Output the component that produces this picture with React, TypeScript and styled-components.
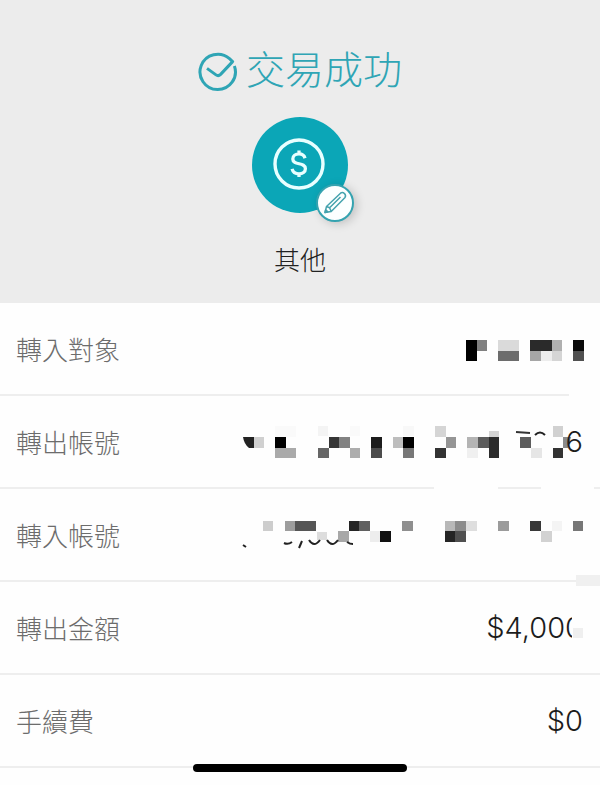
import React from "react";
import styled, { createGlobalStyle } from "styled-components";

const GlobalStyle = createGlobalStyle`
  * { box-sizing: border-box; }
  body {
    margin: 0;
    background: #fefefe;
    font-family: Inter, "Noto Sans CJK TC", sans-serif;
    font-weight: 300;
  }
`;

const Page = styled.main`
  position: relative;
  min-height: 100vh;
  background: #fefefe;
`;

const Header = styled.header`
  display: flex;
  flex-direction: column;
  align-items: center;
  padding: 40px 16px 24px;
  background: #ececec;
`;

const Status = styled.h1`
  display: flex;
  align-items: center;
  gap: 8px;
  margin: 0;
  color: #2fa5b5;
  font-size: 39px;
  font-weight: 300;
  line-height: 60px;
`;

const StatusIcon = styled.svg`
  width: 40px;
  height: 40px;
  margin-top: 4px;
`;

const Category = styled.div`
  position: relative;
  width: 96px;
  height: 96px;
  margin-top: 17px;
  border-radius: 50%;
  background: #0ba6b7;
`;

const CategoryIcon = styled.svg`
  display: block;
  width: 96px;
  height: 96px;
`;

const EditButton = styled.button`
  position: absolute;
  right: -6px;
  bottom: -9px;
  display: grid;
  place-items: center;
  width: 38px;
  height: 38px;
  padding: 0;
  border: 2px solid #35a3b0;
  border-radius: 50%;
  background: #fcffff;
  box-shadow: 3px 2px 10px rgba(0, 0, 0, 0.18);
  cursor: pointer;
`;

const CategoryName = styled.p`
  margin: 30px 0 0;
  color: #222;
  font-size: 26px;
  line-height: 36px;
`;

const Details = styled.dl`
  margin: 0;
`;

const Row = styled.div`
  position: relative;
  display: flex;
  align-items: center;
  justify-content: space-between;
  height: 93px;
  padding: 4px 16px 0;
  border-bottom: 2px solid #eeeeee;
`;

const Label = styled.dt`
  color: #6c6c6c;
  font-size: 26px;
  line-height: 36px;
`;

const Value = styled.dd`
  position: relative;
  display: flex;
  align-items: center;
  margin: 0;
  color: #1c1c1c;
  font-size: 29px;
  line-height: 40px;
`;

const Amount = styled(Value)`
  padding: 0 1px 4px 0;
`;

const AccountValue = styled(Value)`
  padding: 0 1px 4px 0;
`;

const MaskedValue = styled(Value)`
  padding-bottom: 4px;
`;

const Mosaic = styled.svg`
  display: block;
  overflow: visible;
`;

const LineCover = styled.span<{ $right: number; $width: number }>`
  position: absolute;
  right: ${(p) => p.$right}px;
  bottom: -2px;
  width: ${(p) => p.$width}px;
  height: 2px;
  background: #fefefe;
`;

const LineBlock = styled.span`
  position: absolute;
  right: 0;
  bottom: -6px;
  z-index: 1;
  width: 24px;
  height: 11px;
  background: #f0f0f0;
`;

const DigitCover = styled.span`
  position: absolute;
  right: 0;
  top: 0;
  width: 12px;
  height: 40px;
  background: linear-gradient(#efefef, #efefef) 1px 20px / 10px 10px no-repeat #fefefe;
`;

const HomeIndicator = styled.div`
  position: fixed;
  bottom: 13px;
  left: 0;
  right: 0;
  width: 214px;
  height: 8px;
  margin: 0 auto;
  border-radius: 4px;
  background: #000;
`;

type Block = [x: number, y: number, w: number, h: number, fill: string];

const recipientBlocks: Block[] = [
  [0, 0, 11, 21, "#000"],
  [11, 0, 10, 11, "#808080"],
  [32, 0, 21, 11, "#dadada"],
  [32, 11, 21, 10, "#6c6c6c"],
  [64, 0, 22, 11, "#2a2a2a"],
  [86, 0, 10, 11, "#b0b0b0"],
  [64, 11, 11, 10, "#a6a6a6"],
  [75, 11, 11, 10, "#ededed"],
  [86, 11, 10, 10, "#d5d5d5"],
  [107, 0, 11, 11, "#0a0a0a"],
  [107, 11, 11, 10, "#505050"],
];

const sourceBlocks: Block[] = [
  [11, 11, 10, 11, "#d0d0d0"],
  [32, 0, 21, 11, "#fafafa"],
  [32, 11, 11, 11, "#000"],
  [32, 22, 21, 10, "#aaa"],
  [75, 0, 10, 10, "#f4f4f4"],
  [107, 0, 10, 10, "#fafafa"],
  [86, 11, 10, 11, "#363636"],
  [96, 11, 11, 11, "#828282"],
  [75, 22, 11, 10, "#666"],
  [107, 22, 10, 10, "#adadad"],
  [128, 11, 11, 11, "#1c1c1c"],
  [128, 22, 11, 10, "#4c4c4c"],
  [160, 0, 11, 10, "#f8f8f8"],
  [150, 11, 10, 11, "#bdbdbd"],
  [160, 11, 11, 11, "#000"],
  [160, 22, 11, 10, "#777"],
  [192, 0, 11, 11, "#d5d5d5"],
  [203, 11, 10, 11, "#959595"],
  [192, 22, 11, 10, "#333"],
  [224, 11, 11, 11, "#b4b4b4"],
  [235, 11, 11, 11, "#5c5c5c"],
  [246, 5, 10, 6, "#d4d4d4"],
  [246, 11, 10, 21, "#2c2c2c"],
  [224, 22, 11, 10, "#f0f0f0"],
  [277, 11, 11, 11, "#5c5c5c"],
  [288, 22, 11, 10, "#e6e6e6"],
  [310, 0, 10, 11, "#d1d1d1"],
  [310, 22, 10, 10, "#333"],
];

const targetBlocks: Block[] = [
  [21, 0, 10, 10, "#cdcdcd"],
  [43, 0, 10, 10, "#9d9d9d"],
  [53, 0, 21, 10, "#555"],
  [75, 11, 10, 8, "#ddd"],
  [96, 10, 11, 11, "#a8a8a8"],
  [107, 0, 10, 10, "#252525"],
  [117, 0, 11, 10, "#606060"],
  [128, 10, 10, 11, "#ededed"],
  [138, 10, 11, 11, "#111"],
  [160, 0, 11, 10, "#8f8f8f"],
  [203, 0, 10, 10, "#b8b8b8"],
  [213, 0, 11, 10, "#8c8c8c"],
  [224, 0, 11, 10, "#dedede"],
  [203, 10, 10, 11, "#252525"],
  [213, 10, 11, 11, "#505050"],
  [256, 0, 11, 10, "#9b9b9b"],
  [288, 0, 11, 10, "#383838"],
  [299, 10, 11, 11, "#d2d2d2"],
  [310, 0, 10, 10, "#f4f4f4"],
  [331, 0, 10, 10, "#777"],
];

function Blocks({ items }: { items: Block[] }) {
  return (
    <>
      {items.map(([x, y, w, h, fill]) => (
        <rect key={`${x}-${y}`} x={x} y={y} width={w} height={h} fill={fill} shapeRendering="crispEdges" />
      ))}
    </>
  );
}

export default function App() {
  return (
    <Page>
      <GlobalStyle />
      <Header>
        <Status>
          <StatusIcon viewBox="0 0 40 40" fill="none" stroke="currentColor" strokeWidth="3" aria-hidden="true">
            <path d="M36.4 14A17.7 17.7 0 1 1 31.5 6.7L34.6 9.6L22.6 22.4Q20.4 24.6 18 22.9L9 16.4" strokeLinejoin="round" />
          </StatusIcon>
          交易成功
        </Status>
        <Category>
          <CategoryIcon viewBox="0 0 96 96" fill="none" stroke="#e8ffff" aria-hidden="true">
            <circle cx="47" cy="47" r="24" strokeWidth="3.4" />
            <path
              d="M53 41.2C52.2 38.2 50 36.9 47 36.9C43.5 36.9 40.8 38.8 40.8 41.9C40.8 48.9 53.4 44.6 53.4 51.7C53.4 55 50.6 56.8 47 56.8C43.4 56.8 40.9 55.1 40.1 51.8M47 33.5V37.3M47 56.4V60"
              strokeWidth="3.3"
            />
          </CategoryIcon>
          <EditButton type="button" aria-label="編輯分類">
            <svg width="26" height="26" viewBox="0 0 26 26" fill="none" stroke="#45a3ae" strokeWidth="1.5" strokeLinejoin="round" aria-hidden="true">
              <path d="M3 22.5L4.5 16.5L18.5 3.2Q20.5 1.8 22.5 3.6Q24.4 5.8 22.8 7.8L9.2 21.5ZM4.5 16.5L7.6 17.8L9.2 21.5M7.6 17.8L18.5 7" />
              <path d="M3 22.5L3.7 19.8L5.8 21.8Z" fill="#45a3ae" />
            </svg>
          </EditButton>
        </Category>
        <CategoryName>其他</CategoryName>
      </Header>

      <Details>
        <Row>
          <Label>轉入對象</Label>
          <Value>
            <Mosaic width="118" height="21" viewBox="0 0 118 21" aria-hidden="true">
              <Blocks items={recipientBlocks} />
            </Mosaic>
          </Value>
          <LineCover $right={0} $width={31} />
        </Row>
        <Row>
          <Label>轉出帳號</Label>
          <AccountValue>
            <Mosaic width="323" height="32" viewBox="0 0 323 32" aria-hidden="true">
              <Blocks items={sourceBlocks} />
              <path d="M0 11H11V22H6Q1 18 0 11Z" fill="#222" />
              <path d="M320 11H328L325 22H320Z" fill="#8a8a8a" />
              <path d="M273 6L287 7" stroke="#333" strokeWidth="2" />
              <path d="M292 9Q297 4 302 9" stroke="#222" strokeWidth="2" fill="none" />
            </Mosaic>
            6
          </AccountValue>
          <LineCover $right={102} $width={64} />
          <LineCover $right={6} $width={53} />
        </Row>
        <Row>
          <Label>轉入帳號</Label>
          <MaskedValue>
            <Mosaic width="342" height="28" viewBox="0 0 342 28" aria-hidden="true">
              <Blocks items={targetBlocks} />
              <g stroke="#222" strokeWidth="2" fill="none">
                <path d="M1 24L4 26" />
                <path d="M42 22Q46 24 50 21" />
                <path d="M60 20L57 27" />
                <path d="M67 19Q72 27 78 19" />
                <path d="M85 19Q90 27 96 19" />
                <path d="M105 21Q108 23 111 23" />
              </g>
            </Mosaic>
          </MaskedValue>
          <LineBlock />
        </Row>
        <Row>
          <Label>轉出金額</Label>
          <Amount>
            $4,000
            <DigitCover />
          </Amount>
        </Row>
        <Row>
          <Label>手續費</Label>
          <Amount>$0</Amount>
        </Row>
      </Details>
      <HomeIndicator />
    </Page>
  );
}
